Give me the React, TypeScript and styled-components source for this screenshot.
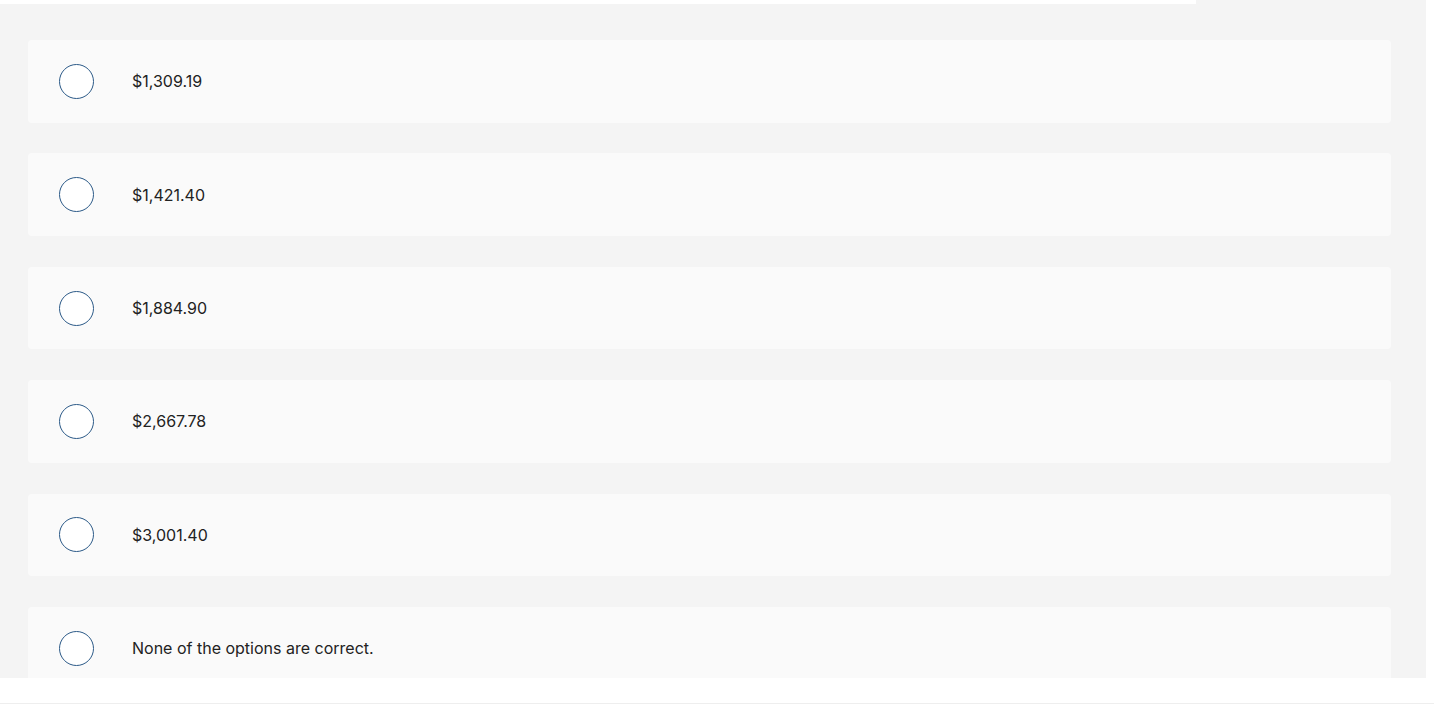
import React from "react";
import styled, { createGlobalStyle } from "styled-components";

const Global = createGlobalStyle`
  html, body { margin: 0; padding: 0; background: #ffffff; }
  body { font-family: Inter, "Liberation Sans", Arial, sans-serif; }
`;

const Page = styled.div`
  width: 1434px;
  height: 710px;
  background: #ffffff;
  display: flex;
  flex-direction: column;
`;

const Panel = styled.div`
  width: 1426px;
  height: 678px;
  background: #f4f4f4;
  overflow: hidden;
  display: flex;
  flex-direction: column;
`;

const TopStrip = styled.div`
  width: 1196px;
  height: 4px;
  background: #ffffff;
  flex: none;
`;

const List = styled.div`
  display: flex;
  flex-direction: column;
  gap: 30.8px;
  padding: 36px 35px 0 28px;
`;

const Card = styled.label`
  flex: none;
  height: 82.6px;
  background: #fafafa;
  border-radius: 4px;
  display: flex;
  align-items: center;
  padding-left: 31px;
  box-sizing: border-box;
  cursor: pointer;
`;

const Radio = styled.span`
  width: 35px;
  height: 35px;
  box-sizing: border-box;
  border-radius: 50%;
  border: 1.6px solid #2c5a88;
  background: #ffffff;
  flex: none;
`;

const Text = styled.span`
  margin-left: 38px;
  font-size: 16px;
  color: #222222;
  letter-spacing: 0;
`;

const BottomLine = styled.div`
  margin-top: 25px;
  height: 1px;
  background: #eeeeee;
`;

const options = [
  "$1,309.19",
  "$1,421.40",
  "$1,884.90",
  "$2,667.78",
  "$3,001.40",
  "None of the options are correct.",
];

export default function App() {
  return (
    <Page>
      <Global />
      <Panel>
        <TopStrip />
        <List>
          {options.map((o) => (
            <Card key={o}>
              <Radio />
              <Text>{o}</Text>
            </Card>
          ))}
        </List>
      </Panel>
      <BottomLine />
    </Page>
  );
}
